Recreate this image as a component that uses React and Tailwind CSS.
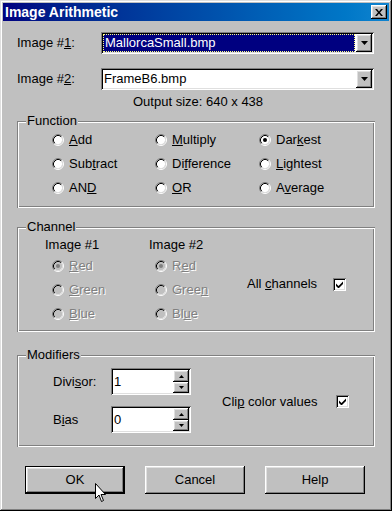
const raised = "shadow-[inset_-1px_-1px_#000,inset_1px_1px_#fff,inset_-2px_-2px_#808080,inset_2px_2px_#dfdfdf]";
const sunken = "shadow-[inset_1px_1px_#808080,inset_-1px_-1px_#fff,inset_2px_2px_#000,inset_-2px_-2px_#dfdfdf]";
const etched = "shadow-[inset_1px_1px_#808080,inset_-1px_-1px_#fff,inset_2px_2px_#fff,inset_-2px_-2px_#808080]";
const dim = "text-[#808080] [text-shadow:1px_1px_0_#fff]";

function Radio({ checked, disabled }) {
  return (
    <svg width="12" height="12" viewBox="0 0 12 12" className="shrink-0">
      <circle cx="6" cy="6" r="4.2" fill={disabled ? "#c0c0c0" : "#fff"} />
      <path d="M2.11 9.89A5.5 5.5 0 0 1 9.89 2.11" stroke="#808080" fill="none" />
      <path d="M9.89 2.11A5.5 5.5 0 0 1 2.11 9.89" stroke="#fff" fill="none" />
      <path d="M2.82 9.18A4.5 4.5 0 0 1 9.18 2.82" stroke="#000" fill="none" />
      <path d="M9.18 2.82A4.5 4.5 0 0 1 2.82 9.18" stroke="#dfdfdf" fill="none" />
      {checked && <circle cx="6" cy="6" r="2" fill={disabled ? "#808080" : "#000"} />}
    </svg>
  );
}

function Option({ children, checked, disabled }) {
  return (
    <div className="flex items-center h-[16px]">
      <Radio checked={checked} disabled={disabled} />
      <span className={`ml-[5px] leading-[16px] ${disabled ? dim : ""}`}>{children}</span>
    </div>
  );
}

function Check() {
  return (
    <span className={`w-[13px] h-[13px] shrink-0 bg-white ${sunken} flex items-center justify-center`}>
      <svg width="7" height="7" viewBox="0 0 7 7">
        <polygon points="0,2.5 2.5,5 7,0.5 7,3 2.5,7.5 0,5" fill="#000" />
      </svg>
    </span>
  );
}

function Arrow({ up, small }) {
  return (
    <svg width={small ? 5 : 7} height={small ? 3 : 4} viewBox={small ? "0 0 5 3" : "0 0 7 4"}>
      <polygon points={small ? (up ? "2.5,0 5,3 0,3" : "0,0 5,0 2.5,3") : "0,0 7,0 3.5,4"} fill="#000" />
    </svg>
  );
}

function Combo({ value, selected }) {
  return (
    <div className={`w-[273px] h-[22px] bg-white ${sunken} p-[2px] flex`}>
      <div className="flex-1 min-w-0 pr-[1px]">
        {selected ? (
          <div className="h-full bg-[#000080] text-white border border-dotted border-[#ffff80] leading-[16px] pl-[1px]">
            {value}
          </div>
        ) : (
          <div className="h-full leading-[18px] pl-[1px]">{value}</div>
        )}
      </div>
      <div className={`w-[16px] h-[18px] bg-[#c0c0c0] ${raised} flex items-center justify-center`}>
        <Arrow />
      </div>
    </div>
  );
}

function Spin({ value }) {
  return (
    <div className={`w-[80px] h-[27px] bg-white ${sunken} p-[2px] flex`}>
      <span className="flex-1 leading-[23px] pl-[1px]">{value}</span>
      <div className="flex flex-col w-[16px]">
        <div className={`h-[12px] bg-[#c0c0c0] ${raised} flex items-center justify-center`}>
          <Arrow up small />
        </div>
        <div className={`h-[11px] bg-[#c0c0c0] ${raised} flex items-center justify-center`}>
          <Arrow small />
        </div>
      </div>
    </div>
  );
}

function Group({ title, className, children }) {
  return (
    <div className={`relative ${etched} ${className}`}>
      <span className="absolute left-[9px] -top-[8px] px-[1px] bg-[#c0c0c0] leading-[16px]">{title}</span>
      {children}
    </div>
  );
}

function Button({ children, isDefault }) {
  return (
    <div
      className={`relative w-[100px] h-[28px] bg-[#c0c0c0] flex items-center justify-center ${
        isDefault
          ? "border border-black shadow-[inset_-1px_-1px_#000,inset_1px_1px_#fff,inset_-2px_-2px_#808080,inset_2px_2px_#dfdfdf]"
          : raised
      }`}
    >
      {children}
      {isDefault && (
        <svg className="absolute left-[69px] top-[16px]" width="12" height="20" viewBox="0 0 12 20">
          <path d="M0.5 0.5V15.5L4 12L6.5 18.5L8.5 17.5L6 11.5H10.5Z" fill="#fff" stroke="#000" />
        </svg>
      )}
    </div>
  );
}

export default function App() {
  return (
    <div className="w-[392px] h-[511px] bg-[#c0c0c0] p-[3px] text-[13px] text-black font-['Liberation_Sans',Arial,sans-serif] shadow-[inset_-1px_-1px_#000,inset_1px_1px_#dfdfdf,inset_-2px_-2px_#808080,inset_2px_2px_#fff]">
      <div className="h-[18px] flex items-center justify-between pl-[2px] pr-[2px] bg-linear-to-r from-[#000080] to-[#1084d0]">
        <span className="text-white font-bold text-[14px] leading-[18px]">Image Arithmetic</span>
        <div className={`w-[16px] h-[14px] bg-[#c0c0c0] ${raised} flex items-center justify-center`}>
          <svg width="8" height="7" viewBox="0 0 8 7">
            <path d="M0 0h2l2 2.5L6 0h2L5 3.5L8 7H6L4 4.5L2 7H0l3-3.5Z" fill="#000" />
          </svg>
        </div>
      </div>

      <div className="px-[14px]">
        <div className="mt-[11px] flex items-center">
          <span className="w-[84px]">Image #<u>1</u>:</span>
          <Combo value="MallorcaSmall.bmp" selected />
        </div>
        <div className="mt-[14px] flex items-center">
          <span className="w-[84px]">Image #<u>2</u>:</span>
          <Combo value="FrameB6.bmp" />
        </div>
        <div className="mt-[4px] h-[16px] leading-[16px] pl-[116px]">Output size: 640 x 438</div>

        <Group title="Function" className="mt-[11px] h-[87px]">
          <div className="pt-[11px] pl-[35px] grid grid-cols-[103px_104px_1fr] gap-y-[8px]">
            <Option><u>A</u>dd</Option>
            <Option><u>M</u>ultiply</Option>
            <Option checked>Dar<u>k</u>est</Option>
            <Option>Sub<u>t</u>ract</Option>
            <Option>Di<u>f</u>ference</Option>
            <Option><u>L</u>ightest</Option>
            <Option>AN<u>D</u></Option>
            <Option><u>O</u>R</Option>
            <Option>A<u>v</u>erage</Option>
          </div>
        </Group>

        <Group title="Channel" className="mt-[19px] h-[105px]">
          <div className="pt-[10px] pl-[28px] flex">
            <div className="w-[104px] flex flex-col">
              <span className="leading-[16px]">Image #1</span>
              <div className="mt-[5px] ml-[7px] flex flex-col gap-y-[8px]">
                <Option checked disabled><u>R</u>ed</Option>
                <Option disabled><u>G</u>reen</Option>
                <Option disabled><u>B</u>lue</Option>
              </div>
            </div>
            <div className="w-[98px] flex flex-col">
              <span className="leading-[16px]">Image #2</span>
              <div className="mt-[5px] ml-[6px] flex flex-col gap-y-[8px]">
                <Option checked disabled>R<u>e</u>d</Option>
                <Option disabled>Gree<u>n</u></Option>
                <Option disabled>Bl<u>u</u>e</Option>
              </div>
            </div>
            <div className="mt-[39px] h-[16px] flex items-center">
              <span className="w-[86px] leading-[16px]">All <u>c</u>hannels</span>
              <Check />
            </div>
          </div>
        </Group>

        <Group title="Modifiers" className="mt-[23px] h-[92px]">
          <div className="pt-[13px] pl-[36px] flex items-center">
            <div className="flex flex-col gap-y-[11px]">
              <div className="flex items-center">
                <span className="w-[58px]">Divi<u>s</u>or:</span>
                <Spin value="1" />
              </div>
              <div className="flex items-center">
                <span className="w-[58px]">B<u>i</u>as</span>
                <Spin value="0" />
              </div>
            </div>
            <div className="ml-[31px] mt-[2px] flex items-center">
              <span className="w-[114px]">Cli<u>p</u> color values</span>
              <Check />
            </div>
          </div>
        </Group>

        <div className="mt-[19px] ml-[8px] flex gap-[20px]">
          <Button isDefault>OK</Button>
          <Button>Cancel</Button>
          <Button>Help</Button>
        </div>
      </div>
    </div>
  );
}
